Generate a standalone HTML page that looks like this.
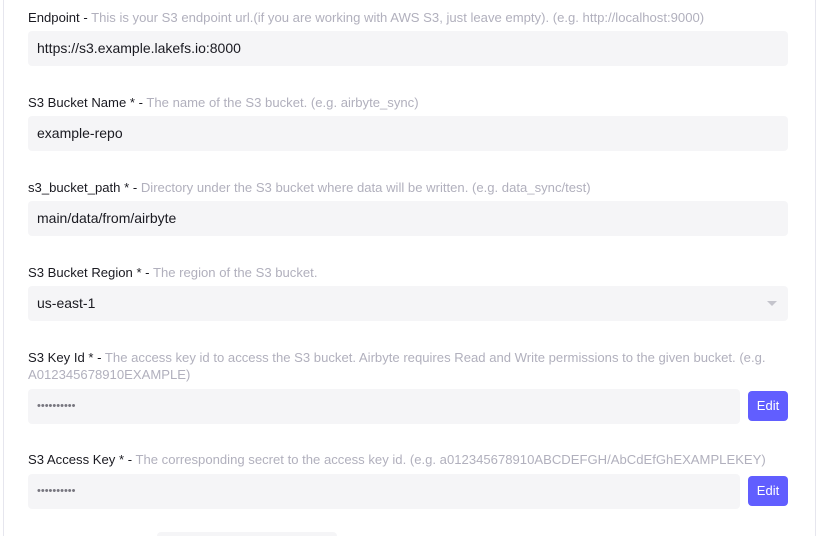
<!DOCTYPE html>
<html style="overflow:hidden;height:536px"><head><style>
body{margin:0;width:817px;height:536px;overflow:hidden;background:#fff;font-family:"Liberation Sans",sans-serif;position:relative}
.frame{position:absolute;left:3px;top:-2px;width:811px;height:540px;border-left:1px solid #e6e6ee;border-right:1px solid #e6e6ee}
.lab{position:absolute;left:28px;font-size:13.1px;color:#1a1a21;line-height:17px;width:760px}
.lab span{color:#b1b0bd}
.in{position:absolute;left:28px;width:760px;height:35px;background:#f5f5f7;border-radius:4px;font-size:14px;color:#1a1a21;line-height:35px;box-sizing:border-box;padding-left:9px}
.pw{font-size:11px;color:#77767f}
.btn{position:absolute;left:748px;width:40px;height:30px;background:#615eff;border-radius:4px;color:#fff;font-size:13px;line-height:30px;text-align:center}
</style></head><body>
<div class="frame"></div>
<div class="lab" style="top:9px">Endpoint - <span>This is your S3 endpoint url.(if you are working with AWS S3, just leave empty). (e.g. http://localhost:9000)</span></div>
<div class="in" style="top:31px">https://s3.example.lakefs.io:8000</div>
<div class="lab" style="top:94px">S3 Bucket Name * - <span>The name of the S3 bucket. (e.g. airbyte_sync)</span></div>
<div class="in" style="top:116px">example-repo</div>
<div class="lab" style="top:179px">s3_bucket_path * - <span>Directory under the S3 bucket where data will be written. (e.g. data_sync/test)</span></div>
<div class="in" style="top:201px">main/data/from/airbyte</div>
<div class="lab" style="top:264px">S3 Bucket Region * - <span>The region of the S3 bucket.</span></div>
<div class="in" style="top:286px">us-east-1<div style="position:absolute;right:11px;top:15px;width:0;height:0;border-left:5px solid transparent;border-right:5px solid transparent;border-top:5px solid #c4c4cc"></div></div>
<div class="lab" style="top:349px">S3 Key Id * - <span>The access key id to access the S3 bucket. Airbyte requires Read and Write permissions to the given bucket. (e.g. A012345678910EXAMPLE)</span></div>
<div class="in pw" style="top:389px;width:712px">••••••••••</div>
<div class="btn" style="top:391px">Edit</div>
<div class="lab" style="top:451px">S3 Access Key * - <span>The corresponding secret to the access key id. (e.g. a012345678910ABCDEFGH/AbCdEfGhEXAMPLEKEY)</span></div>
<div class="in pw" style="top:474px;width:712px">••••••••••</div>
<div class="btn" style="top:476px">Edit</div>
<div style="position:absolute;left:157px;top:532px;width:180px;height:10px;background:#f5f5f7;border-radius:4px"></div>
</body></html>
